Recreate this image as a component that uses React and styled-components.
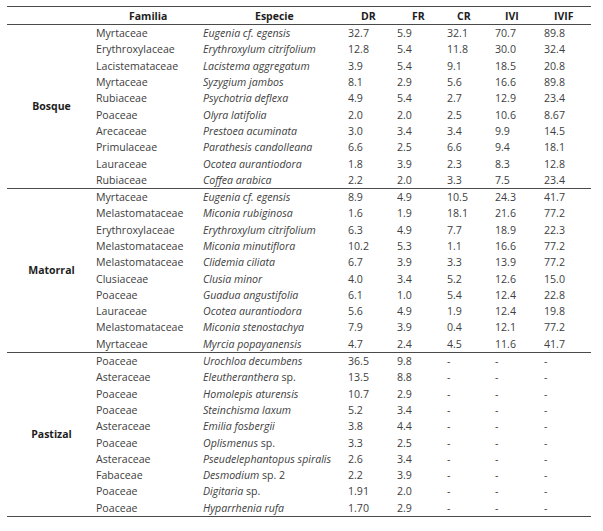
import React from "react"
import styled, { createGlobalStyle } from "styled-components"

const GlobalStyle = createGlobalStyle`
  html, body {
    margin: 0;
    padding: 0;
    background: #ffffff;
  }
  body {
    font-family: "Open Sans", "Noto Sans", "Liberation Sans", sans-serif;
    color: #404040;
  }
`

const groups = [
  {
    name: "Bosque",
    rows: [
      ["Myrtaceae", "Eugenia cf. egensis", "32.7", "5.9", "32.1", "70.7", "89.8"],
      ["Erythroxylaceae", "Erythroxylum citrifolium", "12.8", "5.4", "11.8", "30.0", "32.4"],
      ["Lacistemataceae", "Lacistema aggregatum", "3.9", "5.4", "9.1", "18.5", "20.8"],
      ["Myrtaceae", "Syzygium jambos", "8.1", "2.9", "5.6", "16.6", "89.8"],
      ["Rubiaceae", "Psychotria deflexa", "4.9", "5.4", "2.7", "12.9", "23.4"],
      ["Poaceae", "Olyra latifolia", "2.0", "2.0", "2.5", "10.6", "8.67"],
      ["Arecaceae", "Prestoea acuminata", "3.0", "3.4", "3.4", "9.9", "14.5"],
      ["Primulaceae", "Parathesis candolleana", "6.6", "2.5", "6.6", "9.4", "18.1"],
      ["Lauraceae", "Ocotea aurantiodora", "1.8", "3.9", "2.3", "8.3", "12.8"],
      ["Rubiaceae", "Coffea arabica", "2.2", "2.0", "3.3", "7.5", "23.4"],
    ],
  },
  {
    name: "Matorral",
    rows: [
      ["Myrtaceae", "Eugenia cf. egensis", "8.9", "4.9", "10.5", "24.3", "41.7"],
      ["Melastomataceae", "Miconia rubiginosa", "1.6", "1.9", "18.1", "21.6", "77.2"],
      ["Erythroxylaceae", "Erythroxylum citrifolium", "6.3", "4.9", "7.7", "18.9", "22.3"],
      ["Melastomataceae", "Miconia minutiflora", "10.2", "5.3", "1.1", "16.6", "77.2"],
      ["Melastomataceae", "Clidemia ciliata", "6.7", "3.9", "3.3", "13.9", "77.2"],
      ["Clusiaceae", "Clusia minor", "4.0", "3.4", "5.2", "12.6", "15.0"],
      ["Poaceae", "Guadua angustifolia", "6.1", "1.0", "5.4", "12.4", "22.8"],
      ["Lauraceae", "Ocotea aurantiodora", "5.6", "4.9", "1.9", "12.4", "19.8"],
      ["Melastomataceae", "Miconia stenostachya", "7.9", "3.9", "0.4", "12.1", "77.2"],
      ["Myrtaceae", "Myrcia popayanensis", "4.7", "2.4", "4.5", "11.6", "41.7"],
    ],
  },
  {
    name: "Pastizal",
    rows: [
      ["Poaceae", ["Urochloa decumbens"], "36.5", "9.8", "-", "-", "-"],
      ["Asteraceae", ["Eleutheranthera", " sp."], "13.5", "8.8", "-", "-", "-"],
      ["Poaceae", ["Homolepis aturensis"], "10.7", "2.9", "-", "-", "-"],
      ["Poaceae", ["Steinchisma laxum"], "5.2", "3.4", "-", "-", "-"],
      ["Asteraceae", ["Emilia fosbergii"], "3.8", "4.4", "-", "-", "-"],
      ["Poaceae", ["Oplismenus", " sp."], "3.3", "2.5", "-", "-", "-"],
      ["Asteraceae", ["Pseudelephantopus spiralis"], "2.6", "3.4", "-", "-", "-"],
      ["Fabaceae", ["Desmodium", " sp. 2"], "2.2", "3.9", "-", "-", "-"],
      ["Poaceae", ["Digitaria", " sp."], "1.91", "2.0", "-", "-", "-"],
      ["Poaceae", ["Hyparrhenia rufa"], "1.70", "2.9", "-", "-", "-"],
    ],
  },
]

// column widths, from the left edge of the rule
const bodyColumns = "107px 145px 49px 50px 48px 49px 46px"
const columns = `89px ${bodyColumns}`

const Page = styled.div`
  padding: 6px 0 0 7px;
`

const Table = styled.div`
  width: 584px;
  border-top: 1.5px solid #4a4a4a;
`

const HeaderRow = styled.div`
  display: grid;
  grid-template-columns: ${columns};
  height: 17px;
  align-items: center;
  border-bottom: 1.5px solid #4a4a4a;
`

const HeadCell = styled.div`
  font-weight: 700;
  font-size: 10.5px;
  color: #1e1e1e;
  padding-left: ${props => props.offset || 0}px;
  white-space: nowrap;
`

const Group = styled.div`
  display: grid;
  grid-template-columns: 89px 1fr;
  border-bottom: 1.5px solid #4a4a4a;
`

const GroupLabel = styled.div`
  display: flex;
  align-items: center;
  justify-content: center;
  font-weight: 700;
  font-size: 10.5px;
  color: #1e1e1e;
`

const Rows = styled.div`
  display: flex;
  flex-direction: column;
`

const Row = styled.div`
  display: grid;
  grid-template-columns: ${bodyColumns};
  height: 16.3px;
  align-items: center;
  font-size: 10.6px;
  white-space: nowrap;
`

const Cell = styled.div`
  font-style: ${props => (props.italic ? "italic" : "normal")};
`

const Upright = styled.span`
  font-style: normal;
`

const headOffsets = [0, 33, 52, 13, 15, 10, 10, 10]
const headers = ["", "Familia", "Especie", "DR", "FR", "CR", "IVI", "IVIF"]

function Species({ value }) {
  if (Array.isArray(value)) {
    return (
      <Cell italic>
        {value[0]}
        {value[1] && <Upright>{value[1]}</Upright>}
      </Cell>
    )
  }
  return <Cell italic>{value}</Cell>
}

export default function App() {
  return (
    <Page>
      <GlobalStyle />
      <Table>
        <HeaderRow>
          {headers.map((h, i) => (
            <HeadCell key={i} offset={headOffsets[i]}>
              {h}
            </HeadCell>
          ))}
        </HeaderRow>
        {groups.map(g => (
          <Group key={g.name}>
            <GroupLabel>{g.name}</GroupLabel>
            <Rows>
              {g.rows.map((r, i) => (
                <Row key={i}>
                  <Cell>{r[0]}</Cell>
                  <Species value={r[1]} />
                  {r.slice(2).map((v, j) => (
                    <Cell key={j}>{v}</Cell>
                  ))}
                </Row>
              ))}
            </Rows>
          </Group>
        ))}
      </Table>
    </Page>
  )
}
